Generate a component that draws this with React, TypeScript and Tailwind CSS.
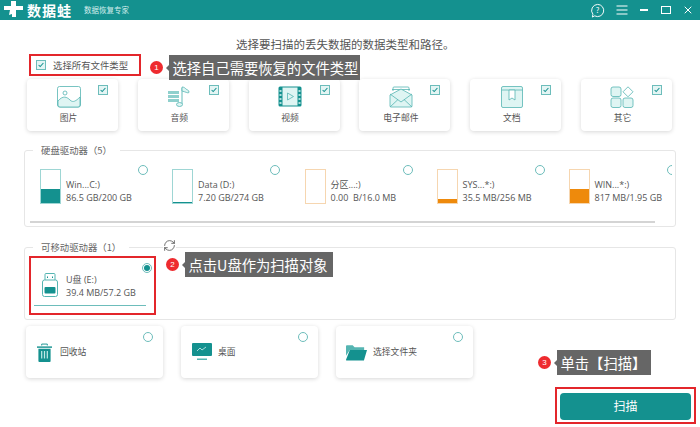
import type { ReactNode } from "react"
import { RefreshCw, X } from "lucide-react"

const sans = "font-['Noto_Sans_CJK_SC','Open_Sans',sans-serif]"

function Check({ className = "" }: { className?: string }) {
  return (
    <div className={"w-[10px] h-[10px] border border-[#6dbdbb] bg-[#e4f5f4] flex items-center justify-center " + className}>
      <svg viewBox="0 0 10 10" className="w-[8px] h-[8px]">
        <path d="M2 5l2 2 4-4.500" fill="none" stroke="#14918f" strokeWidth="1.300" />
      </svg>
    </div>
  )
}

function Radio({ on = false }: { on?: boolean }) {
  return (
    <div className="w-[10px] h-[10px] rounded-full border border-[#6dbdbb] bg-white flex items-center justify-center">
      {on && <div className="w-[6px] h-[6px] rounded-full bg-[#14918f]" />}
    </div>
  )
}

function Badge({ n }: { n: number }) {
  return (
    <div className="w-[13px] h-[13px] rounded-full bg-[#ee2b2f] text-white text-[8px] leading-[13px] text-center font-['Liberation_Sans',sans-serif]">
      {n}
    </div>
  )
}

function Note({ n, text, className, w }: { n: number; text: string; className: string; w: string }) {
  return (
    <div className={"absolute flex items-center " + className}>
      <Badge n={n} />
      <div className="w-0 h-0 ml-[3px] border-y-[3px] border-y-transparent border-r-[3px] border-r-[#666]" />
      <div className={"h-[25px] bg-[#666] text-white text-[14.300px] leading-[25px] whitespace-nowrap pl-[3.500px] " + w}>{text}</div>
    </div>
  )
}

const ic = { fill: "#dff5f3", stroke: "#55b5b2", strokeWidth: 0.8 }

function TypeIcon({ kind }: { kind: string }) {
  return (
    <svg viewBox="0 0 24 22" className="w-[24px] h-[22px]">
      {kind === "image" && (
        <g>
          <rect x="0.500" y="0.500" width="23" height="20.500" rx="2" fill="#fff" stroke="#55b5b2" strokeWidth="0.800" />
          <circle cx="8" cy="7" r="2" fill="none" stroke="#55b5b2" strokeWidth="0.800" />
          <path d="M1 15c5-6 9-4 12-1s6 1 10-3v8a2 2 0 0 1-2 2H3a2 2 0 0 1-2-2z" {...ic} />
        </g>
      )}
      {kind === "audio" && (
        <g>
          <rect x="1" y="5" width="11" height="11" fill="#8fd0cd" />
          <path d="M1 8.500h11M1 12.500h11" stroke="#fff" strokeWidth="1" />
          <path d="M15 2v16" stroke="#55b5b2" strokeWidth="0.900" />
          <path d="M15 1c2 0 3 1 4 2s3 1 3 3-3 0-7-1z" {...ic} />
          <ellipse cx="12.500" cy="18.500" rx="3" ry="2" {...ic} />
        </g>
      )}
      {kind === "video" && (
        <g>
          <rect x="0.500" y="0.500" width="23" height="20" rx="1.500" fill="#14918f" />
          <rect x="4.500" y="1.500" width="15" height="18" fill="#dff5f3" />
          <path d="M9.500 7v7l6-3.500z" fill="none" stroke="#55b5b2" strokeWidth="0.800" />
          <path d="M1.500 5h2M1.500 9h2M1.500 13h2M1.500 17h2M20.500 5h2M20.500 9h2M20.500 13h2M20.500 17h2" stroke="#dff5f3" strokeWidth="1.500" />
        </g>
      )}
      {kind === "mail" && (
        <g>
          <path d="M4 5V2a1 1 0 0 1 1-1h14a1 1 0 0 1 1 1v3" fill="none" stroke="#55b5b2" strokeWidth="0.800" />
          <path d="M3 3.500h18" stroke="#55b5b2" strokeWidth="0.800" />
          <path d="M1 9l11-6 11 6v11a1 1 0 0 1-1 1H2a1 1 0 0 1-1-1z" {...ic} />
          <path d="M1 8l11 8 11-8M1 21l8-7.500M23 21l-8-7.500" fill="none" stroke="#55b5b2" strokeWidth="0.800" />
        </g>
      )}
      {kind === "doc" && (
        <g>
          <rect x="1.500" y="0.500" width="21" height="21" rx="1.500" {...ic} />
          <path d="M1.500 4h21" stroke="#55b5b2" strokeWidth="0.800" />
          <path d="M9 4v10l3-2 3 2V4z" fill="#fff" stroke="#55b5b2" strokeWidth="0.800" />
        </g>
      )}
      {kind === "other" && (
        <g {...ic}>
          <rect x="1" y="1" width="10" height="9.500" rx="2" />
          <path d="M18 0.800l5 5-5 5-5-5z" fill="#fff" />
          <rect x="1" y="12" width="10" height="9.500" rx="2" />
          <rect x="13" y="12" width="10" height="9.500" rx="2" />
        </g>
      )}
    </svg>
  )
}

const types = [
  { kind: "image", label: "图片" },
  { kind: "audio", label: "音频" },
  { kind: "video", label: "视频" },
  { kind: "mail", label: "电子邮件" },
  { kind: "doc", label: "文档" },
  { kind: "other", label: "其它" },
]

function TypeCard({ kind, label }: { kind: string; label: string }) {
  return (
    <div className="relative w-[91px] h-[52px] rounded-[4px] bg-white shadow-[0_1px_4px_rgba(0,0,0,0.16)] flex flex-col items-center pt-[7px] pr-[8px]">
      <TypeIcon kind={kind} />
      <div className="text-[8.800px] leading-[12px] mt-[4px] text-[#555]">{label}</div>
      <Check className="absolute top-[6px] right-[10px]" />
    </div>
  )
}

const drives = [
  { name: "Win...C:)", size: "86.5 GB/200 GB", fill: 43, color: "#14918f", border: "#9ed6d4", w: "w-[132px]" },
  { name: "Data (D:)", size: "7.20 GB/274 GB", fill: 3, color: "#14918f", border: "#9ed6d4", w: "w-[132.500px]" },
  { name: "分区...:)", size: "0.00  B/16.0 MB", fill: 0, color: "#ee8a0c", border: "#f6d6b0", w: "w-[132px]" },
  { name: "SYS...*:)", size: "35.5 MB/256 MB", fill: 13, color: "#ee8a0c", border: "#f6d6b0", w: "w-[132px]" },
  { name: "WIN...*:)", size: "817 MB/1.95 GB", fill: 41, color: "#ee8a0c", border: "#f6d6b0", w: "w-[110px]" },
]

function Drive({ d }: { d: (typeof drives)[number] }) {
  return (
    <div className={"relative shrink-0 flex items-start " + d.w}>
      <div className="w-[21px] h-[35px] border flex flex-col justify-end" style={{ borderColor: d.border }}>
        <div style={{ height: d.fill + "%", background: d.color }} />
      </div>
      <div className="ml-[5px] mt-[10px] text-[9px] leading-[12.500px] text-[#555] whitespace-pre font-['Open_Sans','Noto_Sans_CJK_SC',sans-serif]">
        <div>{d.name}</div>
        <div>{d.size}</div>
      </div>
      <div className="absolute top-[-4px] left-[98px]">
        <Radio />
      </div>
    </div>
  )
}

function Legend({ text }: { text: string }) {
  return (
    <div className="absolute left-[8px] top-[-8px] bg-white px-[8px] text-[9.400px] leading-[14px] text-[#666] whitespace-nowrap">{text}</div>
  )
}

function PlaceCard({ label, children }: { label: string; children: ReactNode }) {
  return (
    <div className="relative w-[137px] h-[52px] rounded-[4px] bg-white shadow-[0_1px_4px_rgba(0,0,0,0.16)] flex items-center pl-[10px] gap-[6px]">
      {children}
      <div className="text-[8.800px] text-[#555]">{label}</div>
      <div className="absolute top-[6px] right-[10px]">
        <Radio />
      </div>
    </div>
  )
}

export default function App() {
  return (
    <div className={"relative w-[700px] h-[427px] overflow-hidden bg-white " + sans}>
      <header className="h-[20px] bg-[#14918f] flex items-center pl-[4px] pr-[6px] text-white">
        <svg viewBox="0 0 20 16" className="w-[20px] h-[16px] mb-[2px]">
          <path d="M7 0h5v5h7v4h-7v7H8v-3l-3 1 1-5H0V5h7z" fill="#fff" />
        </svg>
        <div className="ml-[3px] text-[14px] leading-[20px] font-bold tracking-[1px] mb-[1px]">数据蛙</div>
        <div className="ml-[12px] text-[7.500px] leading-[20px] text-[#d5eeed]">数据恢复专家</div>
        <div className="ml-auto flex items-center">
          <svg viewBox="0 0 16 16" className="w-[15px] h-[15px]">
            <path d="M8 1.500a6.500 6.500 0 1 1-3 12.200L2.500 15l.6-3A6.500 6.500 0 0 1 8 1.500z" fill="none" stroke="#fff" strokeWidth="1" />
            <text x="8" y="11" fontSize="8" fill="#fff" textAnchor="middle">?</text>
          </svg>
          <svg viewBox="0 0 12 10" className="w-[12px] h-[10px] ml-[11px]">
            <path d="M0.500 1h11M0.500 5h11M0.500 9h11" stroke="#fff" strokeWidth="1" />
          </svg>
          <div className="w-[8px] h-[1.500px] bg-white ml-[12px]" />
          <div className="w-[10px] h-[8px] border-[1.500px] border-white ml-[13px]" />
          <X className="w-[12px] h-[12px] ml-[11px]" strokeWidth={2} />
        </div>
      </header>

      <main className="relative">
        <h1 className="pt-[16px] pl-[236px] text-[11.500px] leading-[16px] text-[#555] font-normal whitespace-nowrap">
          选择要扫描的丢失数据的数据类型和路径。
        </h1>
        <div className="mt-[3px] ml-[36px] h-[20px] flex items-center gap-[7px]">
          <Check />
          <span className="text-[9.400px] text-[#555]">选择所有文件类型</span>
        </div>
        <div className="mt-[4px] ml-[27px] flex gap-[19.800px]">
          {types.map((t) => (
            <TypeCard key={t.kind} {...t} />
          ))}
        </div>

        <section className="relative mt-[19px] ml-[24px] w-[652px] h-[77px] rounded-[3px] border border-[#e6e6e6] pl-[15px] pr-[3px] pt-[13px]">
          <Legend text="硬盘驱动器（5）" />
          <div className="flex overflow-hidden pt-[5px]">
            {drives.map((d) => (
              <Drive key={d.name} d={d} />
            ))}
          </div>
          <div className="absolute left-[5px] bottom-[3px] w-[625px] h-[2px] bg-[#d4d4d4]" />
        </section>

        <section className="relative mt-[20px] ml-[24px] w-[652px] h-[73px] rounded-[3px] border border-[#e6e6e6] pt-[8px]">
          <Legend text="可移动驱动器（1）" />
          <RefreshCw className="absolute left-[138px] top-[-9px] w-[13px] h-[13px] bg-white text-[#555]" strokeWidth={1.500} />
          <div className="relative ml-[4px] w-[127px] h-[59px] border-2 border-[#e3262b] pl-[11px] pt-[15px]">
            <div className="flex items-start">
              <svg viewBox="0 0 16 24" className="w-[16px] h-[24px]">
                <path d="M3 7V1.500a1 1 0 0 1 1-1h8a1 1 0 0 1 1 1V7" fill="#fff" stroke="#55b5b2" strokeWidth="1" />
                <path d="M5.500 3.500v1.500M10.500 3.500v1.500" stroke="#14918f" strokeWidth="1" />
                <rect x="0.500" y="7" width="15" height="16.500" rx="2" fill="#fff" stroke="#55b5b2" strokeWidth="1" />
                <rect x="2.500" y="14" width="11" height="6.500" rx="1" fill="#14918f" />
              </svg>
              <div className="ml-[8px] mt-[1px] text-[9px] leading-[12.500px] text-[#555] font-['Open_Sans','Noto_Sans_CJK_SC',sans-serif] whitespace-nowrap">
                <div>U盘 (E:)</div>
                <div>39.4 MB/57.2 GB</div>
              </div>
            </div>
            <div className="absolute left-[3px] bottom-[7px] w-[112px] h-px bg-[#6dbdbb]" />
            <div className="absolute top-[5px] right-[2px]">
              <Radio on />
            </div>
          </div>
        </section>

        <div className="mt-[6px] ml-[26px] flex gap-[18px]">
          <PlaceCard label="回收站">
            <svg viewBox="0 0 16 20" className="w-[15px] h-[19px] ml-[1px] mr-[2px]">
              <path d="M5 2.500V1h6v1.500" fill="none" stroke="#14918f" strokeWidth="1" />
              <path d="M0 3.500h16V5H0z" fill="#14918f" />
              <path d="M1.500 6h13v13a1 1 0 0 1-1 1h-11a1 1 0 0 1-1-1z" fill="#14918f" />
              <path d="M5 8.500v8M8 8.500v8M11 8.500v8" stroke="#bfe8e6" strokeWidth="1.300" />
            </svg>
          </PlaceCard>
          <PlaceCard label="桌面">
            <svg viewBox="0 0 20 18" className="w-[20px] h-[18px] ml-[1px]">
              <rect x="0" y="0" width="20" height="13" rx="1" fill="#14918f" />
              <path d="M5 8l3-3 2 2 4-3" fill="none" stroke="#cfeeed" strokeWidth="0.800" />
              <rect x="5" y="15.500" width="10" height="1.500" fill="#55b5b2" />
            </svg>
          </PlaceCard>
          <PlaceCard label="选择文件夹">
            <svg viewBox="0 0 22 17" className="w-[21px] h-[17px]">
              <path d="M0 2a1 1 0 0 1 1-1h6l2 2h10v3H4L0 12z" fill="#55b5b2" />
              <path d="M4 6h18l-3 10a1 1 0 0 1-1 1H1a1 1 0 0 1-1-1z" fill="#14918f" />
            </svg>
          </PlaceCard>
        </div>

        <div className="absolute left-[555px] top-[367px] w-[141px] h-[37px] border-2 border-[#e3262b] p-[3px]">
          <button className="w-full h-full rounded-[4px] bg-[#14918f] text-white text-[12px]">扫描</button>
        </div>
      </main>

      <div className="absolute left-[29px] top-[54px] w-[112px] h-[22px] border-2 border-[#e3262b]" />
      <Note n={1} text="选择自己需要恢复的文件类型" className="left-[150px] top-[55px]" w="w-[191px]" />
      <Note n={2} text="点击U盘作为扫描对象" className="left-[166px] top-[252px]" w="w-[148px]" />
      <Note n={3} text="单击【扫描】" className="left-[538px] top-[350px]" w="w-[94px]" />
    </div>
  )
}
